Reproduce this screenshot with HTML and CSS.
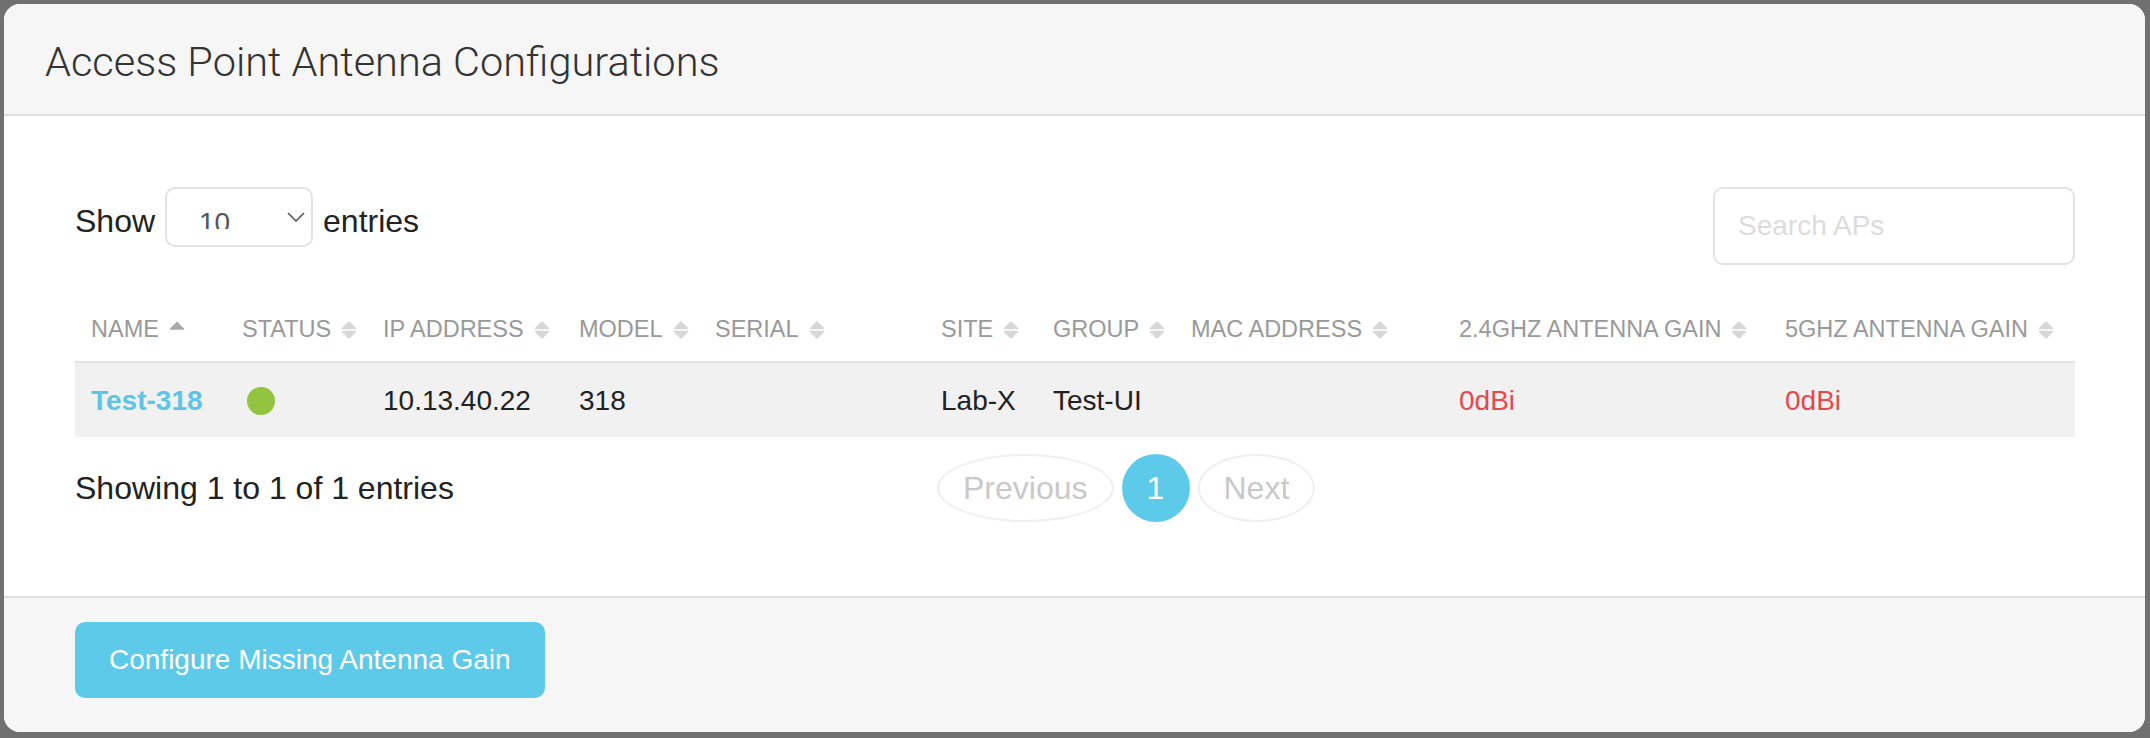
FILE: index.html
```html
<!DOCTYPE html>
<html lang="en">
<head>
<meta charset="utf-8">
<title>Access Point Antenna Configurations</title>
<link rel="stylesheet" href="styles.css">
</head>
<body>
<div class="modal">
  <div class="modal-header">
    <h4 class="modal-title">Access Point Antenna Configurations</h4>
  </div>
  <div class="modal-body">
    <div class="toolbar">
      <div class="length">
        <span class="length-text">Show</span>
        <div class="select">
          <span class="select-value">10</span>
          <svg class="chevron" width="18" height="10" viewBox="0 0 18 10"><path d="M1 1 L9 9 L17 1" fill="none" stroke="#555" stroke-width="1.6"/></svg>
        </div>
        <span class="length-text">entries</span>
      </div>
      <input class="search" type="text" placeholder="Search APs">
    </div>

    <table class="ap-table">
      <colgroup>
        <col class="c-name"><col class="c-status"><col class="c-ip"><col class="c-model"><col class="c-serial">
        <col class="c-site"><col class="c-group"><col class="c-mac"><col class="c-g24"><col class="c-g5">
      </colgroup>
      <thead>
        <tr>
          <th>NAME<svg class="sort" width="16" height="18" viewBox="0 0 16 18"><path d="M8 1.5 L14.5 8 L1.5 8 Z" fill="#a9a9a9" stroke="#a9a9a9" stroke-linejoin="round" stroke-width="1.5"/></svg></th>
          <th>STATUS<svg class="sort" width="16" height="18" viewBox="0 0 16 18"><path d="M8 1 L14.5 7.5 L1.5 7.5 Z M1.5 10.5 L14.5 10.5 L8 17 Z" fill="#d7d7d7" stroke="#d7d7d7" stroke-linejoin="round" stroke-width="1.5"/></svg></th>
          <th>IP ADDRESS<svg class="sort" width="16" height="18" viewBox="0 0 16 18"><path d="M8 1 L14.5 7.5 L1.5 7.5 Z M1.5 10.5 L14.5 10.5 L8 17 Z" fill="#d7d7d7" stroke="#d7d7d7" stroke-linejoin="round" stroke-width="1.5"/></svg></th>
          <th>MODEL<svg class="sort" width="16" height="18" viewBox="0 0 16 18"><path d="M8 1 L14.5 7.5 L1.5 7.5 Z M1.5 10.5 L14.5 10.5 L8 17 Z" fill="#d7d7d7" stroke="#d7d7d7" stroke-linejoin="round" stroke-width="1.5"/></svg></th>
          <th>SERIAL<svg class="sort" width="16" height="18" viewBox="0 0 16 18"><path d="M8 1 L14.5 7.5 L1.5 7.5 Z M1.5 10.5 L14.5 10.5 L8 17 Z" fill="#d7d7d7" stroke="#d7d7d7" stroke-linejoin="round" stroke-width="1.5"/></svg></th>
          <th>SITE<svg class="sort" width="16" height="18" viewBox="0 0 16 18"><path d="M8 1 L14.5 7.5 L1.5 7.5 Z M1.5 10.5 L14.5 10.5 L8 17 Z" fill="#d7d7d7" stroke="#d7d7d7" stroke-linejoin="round" stroke-width="1.5"/></svg></th>
          <th>GROUP<svg class="sort" width="16" height="18" viewBox="0 0 16 18"><path d="M8 1 L14.5 7.5 L1.5 7.5 Z M1.5 10.5 L14.5 10.5 L8 17 Z" fill="#d7d7d7" stroke="#d7d7d7" stroke-linejoin="round" stroke-width="1.5"/></svg></th>
          <th>MAC ADDRESS<svg class="sort" width="16" height="18" viewBox="0 0 16 18"><path d="M8 1 L14.5 7.5 L1.5 7.5 Z M1.5 10.5 L14.5 10.5 L8 17 Z" fill="#d7d7d7" stroke="#d7d7d7" stroke-linejoin="round" stroke-width="1.5"/></svg></th>
          <th>2.4GHZ ANTENNA GAIN<svg class="sort" width="16" height="18" viewBox="0 0 16 18"><path d="M8 1 L14.5 7.5 L1.5 7.5 Z M1.5 10.5 L14.5 10.5 L8 17 Z" fill="#d7d7d7" stroke="#d7d7d7" stroke-linejoin="round" stroke-width="1.5"/></svg></th>
          <th>5GHZ ANTENNA GAIN<svg class="sort" width="16" height="18" viewBox="0 0 16 18"><path d="M8 1 L14.5 7.5 L1.5 7.5 Z M1.5 10.5 L14.5 10.5 L8 17 Z" fill="#d7d7d7" stroke="#d7d7d7" stroke-linejoin="round" stroke-width="1.5"/></svg></th>
        </tr>
      </thead>
      <tbody>
        <tr>
          <td><a class="ap-link" href="#">Test-318</a></td>
          <td><span class="status-dot"></span></td>
          <td>10.13.40.22</td>
          <td>318</td>
          <td></td>
          <td>Lab-X</td>
          <td>Test-UI</td>
          <td></td>
          <td class="gain">0dBi</td>
          <td class="gain">0dBi</td>
        </tr>
      </tbody>
    </table>

    <div class="table-footer">
      <div class="info">Showing 1 to 1 of 1 entries</div>
      <div class="paging">
        <span class="page-btn disabled">Previous</span>
        <span class="page-num active">1</span>
        <span class="page-btn disabled">Next</span>
      </div>
    </div>
  </div>
  <div class="modal-footer">
    <button class="btn-primary" type="button">Configure Missing Antenna Gain</button>
  </div>
</div>
</body>
</html>
```

FILE: styles.css
```css
* { box-sizing: border-box; }

html, body {
  margin: 0;
  padding: 0;
}

body {
  background: #707070;
  width: 2150px;
  height: 738px;
  overflow: hidden;
  font-family: "Liberation Sans", Arial, Helvetica, sans-serif;
  color: #222;
  padding: 4px 5px 6px 4px;
}

.modal {
  width: 2141px;
  background: #fff;
  border-radius: 16px;
  overflow: hidden;
}

.modal-header {
  height: 112px;
  background: #f6f6f6;
  border-bottom: 2px solid #e0e0e0;
  display: flex;
  align-items: center;
  padding-left: 41px;
  padding-top: 4px;
}

.modal-title {
  margin: 0;
  font-family: Roboto, "Liberation Sans", sans-serif;
  font-weight: 300;
  font-size: 41.5px;
  color: #333;
  letter-spacing: 0;
}

.modal-body {
  padding: 71px 70px 74px 71px;
  background: #fff;
}

.toolbar {
  display: flex;
  justify-content: space-between;
  align-items: flex-start;
}

.length {
  display: flex;
  align-items: flex-start;
  gap: 10px;
  font-size: 32px;
}

.length-text {
  line-height: 60px;
  padding-top: 4px;
}

.select {
  width: 148px;
  height: 60px;
  border: 2px solid #e3e3e3;
  border-radius: 10px;
  display: flex;
  align-items: flex-start;
  padding-left: 32px;
}

.select-value {
  display: block;
  margin-top: 20px;
  height: 20px;
  line-height: 28px;
  font-size: 28px;
  color: #555;
  overflow: hidden;
}

.chevron {
  margin-left: auto;
  margin-right: 6px;
  margin-top: 23px;
}

.search {
  width: 362px;
  height: 78px;
  border: 2px solid #e3e3e3;
  border-radius: 10px;
  padding: 0 0 0 23px;
  font-family: "Liberation Sans", Arial, sans-serif;
  font-size: 28px;
  color: #333;
  outline: none;
  background: #fff;
}

.search::placeholder {
  color: #dcdcdc;
}

.ap-table {
  width: 2000px;
  margin-top: 34px;
  border-collapse: collapse;
  table-layout: fixed;
}

.c-name { width: 151px; }
.c-status { width: 141px; }
.c-ip { width: 196px; }
.c-model { width: 136px; }
.c-serial { width: 226px; }
.c-site { width: 112px; }
.c-group { width: 138px; }
.c-mac { width: 268px; }
.c-g24 { width: 326px; }
.c-g5 { width: 306px; }

.ap-table th {
  text-align: left;
  font-weight: 400;
  font-size: 23.5px;
  line-height: 28px;
  color: #999;
  padding: 16px 0 18px 16px;
  border-bottom: 2px solid #e3e3e3;
  white-space: nowrap;
}

.sort {
  vertical-align: -2px;
  margin-left: 10px;
}

.ap-table td {
  font-size: 28px;
  line-height: 28px;
  padding: 24px 0 22px 16px;
  background: #f1f1f1;
  white-space: nowrap;
  color: #222;
}

.ap-table td.gain {
  color: #e9474b;
}

.ap-link {
  color: #5bc6e8;
  font-weight: 700;
  text-decoration: none;
}

.status-dot {
  display: inline-block;
  width: 28px;
  height: 28px;
  border-radius: 50%;
  background: #93c43f;
  margin-left: 5px;
  vertical-align: top;
}

.table-footer {
  display: flex;
  align-items: center;
  margin-top: 17px;
}

.info {
  width: 833px;
  font-size: 32px;
}

.paging {
  display: flex;
  gap: 8px;
  padding-left: 29px;
  font-size: 32px;
}

.page-btn {
  height: 68px;
  line-height: 64px;
  padding: 0 24px;
  border: 2px solid #efefef;
  border-radius: 50%;
  color: #c9c9c9;
}

.page-num {
  width: 68px;
  height: 68px;
  line-height: 68px;
  text-align: center;
  border-radius: 50%;
  background: #5ecaea;
  color: #fff;
}

.modal-footer {
  background: #f6f6f6;
  border-top: 2px solid #e0e0e0;
  padding: 24px 71px 34px;
}

.btn-primary {
  height: 76px;
  padding: 0 34px;
  border: none;
  border-radius: 10px;
  background: #5ecaea;
  color: #fff;
  font-family: "Liberation Sans", Arial, sans-serif;
  font-size: 28px;
  cursor: pointer;
}
```
